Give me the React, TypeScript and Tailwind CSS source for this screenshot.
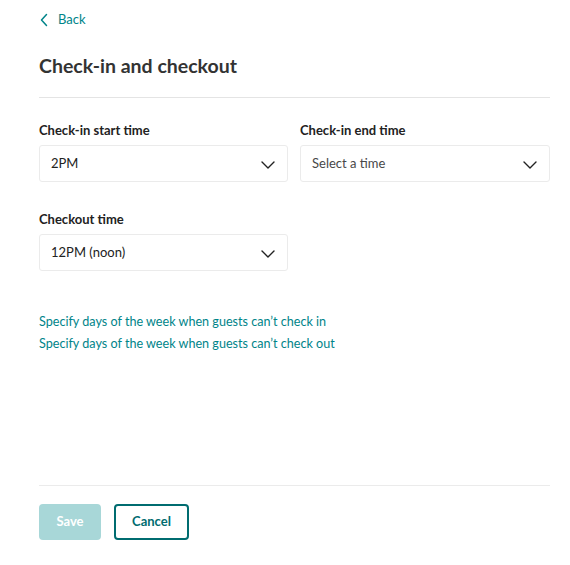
const font = { fontFamily: 'Lato, "Open Sans", sans-serif' };

function Chevron() {
  return (
    <svg width="16" height="16" viewBox="0 0 16 16" fill="none" className="shrink-0">
      <path d="M2 6 L8 12 L14 6" stroke="#222" strokeWidth="1.4" strokeLinecap="round" strokeLinejoin="round" />
    </svg>
  );
}

function BackChevron() {
  return (
    <svg width="10" height="14" viewBox="0 0 10 14" fill="none" className="shrink-0">
      <path d="M7.5 1.5 L2.5 7 L7.5 12.5" stroke="#008489" strokeWidth="1.5" strokeLinecap="round" strokeLinejoin="round" />
    </svg>
  );
}

function SelectField({ label, value, placeholder }: { label: string; value: string; placeholder?: boolean }) {
  return (
    <div className="flex flex-col">
      <label className="h-[18px] text-[13px] leading-[18px] font-bold text-[#222]">{label}</label>
      <div className="mt-[6px] flex h-[37px] items-center justify-between rounded-[3px] border border-[#ebebeb] bg-white pl-[11px] pr-[11px]">
        <span className={`text-[13px] ${placeholder ? 'text-[#484848]' : 'text-[#222]'}`}>{value}</span>
        <Chevron />
      </div>
    </div>
  );
}

export default function App() {
  return (
    <div className="min-h-[565px] w-[570px] bg-white pl-[39px] pr-[20px]" style={font}>
      {/* Back link */}
      <div className="mt-[10px] flex h-[20px] items-center gap-[9px] text-[13px] text-[#008489]">
        <BackChevron />
        <span>Back</span>
      </div>

      <h1 className="mt-[24px] h-[24px] text-[19.5px] leading-[24px] font-bold text-[#333]">Check-in and checkout</h1>

      <div className="mt-[19px] border-t border-[#e4e4e4]" />

      <div className="mt-[23px] grid grid-cols-[249px_250px] gap-x-[12px] gap-y-[28px]">
        <SelectField label="Check-in start time" value="2PM" />
        <SelectField label="Check-in end time" value="Select a time" placeholder />
        <SelectField label="Checkout time" value="12PM (noon)" />
      </div>

      <div className="mt-[40px] flex flex-col gap-[1px] text-[12.6px] leading-[21px] text-[#008489]">
        <a>Specify days of the week when guests can’t check in</a>
        <a>Specify days of the week when guests can’t check out</a>
      </div>

      <div className="mt-[131px] border-t border-[#ebebeb]" />

      <div className="mt-[18px] flex gap-[13px]">
        <button className="h-[36px] w-[62px] rounded-[4px] bg-[#a8d7d8] text-[13px] font-bold text-white">Save</button>
        <button className="h-[36px] w-[75px] rounded-[4px] border-2 border-[#006c70] bg-white text-[13px] font-bold text-[#006c70]">Cancel</button>
      </div>
    </div>
  );
}
